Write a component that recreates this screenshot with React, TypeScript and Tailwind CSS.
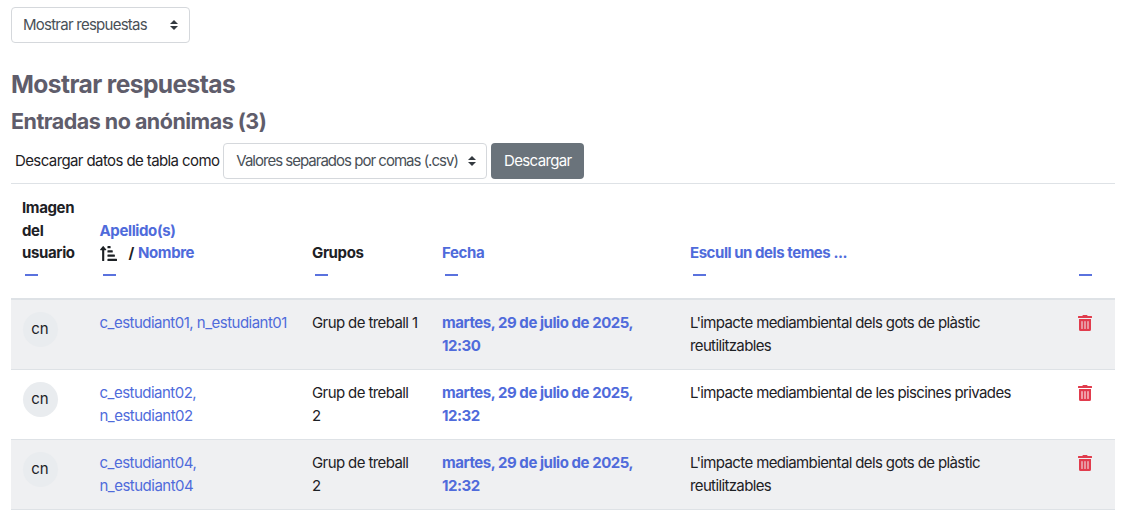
import { FaSortAmountUpAlt, FaTrashAlt } from "react-icons/fa";

const rows = [
  {
    name: ["c_estudiant01, n_estudiant01"],
    group: "Grup de treball 1",
    time: "12:30",
    topic: "L'impacte mediambiental dels gots de plàstic reutilitzables",
    shaded: true,
  },
  {
    name: ["c_estudiant02,", "n_estudiant02"],
    group: "Grup de treball 2",
    time: "12:32",
    topic: "L'impacte mediambiental de les piscines privades",
    shaded: false,
  },
  {
    name: ["c_estudiant04,", "n_estudiant04"],
    group: "Grup de treball 2",
    time: "12:32",
    topic: "L'impacte mediambiental dels gots de plàstic reutilitzables",
    shaded: true,
  },
];

function SelectCaret() {
  return (
    <svg width="10" height="12" viewBox="0 0 10 12" className="shrink-0" aria-hidden="true">
      <path d="M5 1 L9 5 H1 Z M5 11 L1 7 H9 Z" fill="#343a40" />
    </svg>
  );
}

function Dash() {
  return <span className="mx-[3px] block h-[21.5px] w-[13px] pt-[9px]"><span className="block h-[2px] bg-[#5a72de]" /></span>;
}

export default function App() {
  return (
    <div className="h-[531px] overflow-hidden bg-white px-[11px] pt-[7px] font-['Inter',sans-serif] text-[15px] leading-[22.5px] tracking-[-0.042em] text-[#1d2125]">
      <div className="flex h-9 w-[179px] items-center justify-between rounded-[4px] border border-[#d5d8dc] pl-[11px] pr-[10px] tracking-[-0.05em] text-[#495057]">
        <span>Mostrar respuestas</span>
        <SelectCaret />
      </div>

      <h2 className="mt-[27px] text-[24.6px] leading-[28px] font-bold tracking-[-0.024em] text-[#5f5d6b]">Mostrar respuestas</h2>
      <h3 className="mt-[11px] text-[21.5px] leading-[25px] font-bold tracking-[-0.024em] text-[#5f5d6b]">Entradas no anónimas (3)</h3>

      <div className="mt-[9px] flex items-center gap-1 pl-1">
        <span className="tracking-[-0.04em]">Descargar datos de tabla como</span>
        <div className="flex h-9 w-[264px] items-center justify-between rounded-[4px] border border-[#d5d8dc] pl-3 pr-[9px] text-[#495057]">
          <span className="whitespace-nowrap tracking-[-0.066em]">Valores separados por comas (.csv)</span>
          <SelectCaret />
        </div>
        <button className="h-9 w-[93px] rounded-[4px] bg-[#6a737b] text-white">Descargar</button>
      </div>

      <table className="mt-[4px] w-[1104px] table-fixed border-collapse border-t border-[#dee2e6]">
        <thead>
          <tr className="border-b-2 border-[#dee2e6] align-bottom tracking-[-0.025em]">
            <th className="w-[76.5px] pt-[13px] pr-0 pb-3 pl-[11px] text-left font-bold">
              Imagen del usuario
              <Dash />
            </th>
            <th className="w-[212.5px] px-3 pt-[13px] pb-3 text-left font-bold text-[#4f6bdb]">
              Apellido(s)
              <div className="flex items-center text-[#1d2125]">
                <FaSortAmountUpAlt className="size-[17px]" />
                <span className="ml-[12px] mr-1">/</span>
                <span className="text-[#4f6bdb]">Nombre</span>
              </div>
              <Dash />
            </th>
            <th className="w-[130px] px-3 pt-[13px] pb-3 text-left font-bold">
              Grupos
              <Dash />
            </th>
            <th className="w-[248px] px-3 pt-[13px] pb-3 text-left font-bold text-[#4f6bdb]">
              Fecha
              <Dash />
            </th>
            <th className="w-[376px] px-3 pt-[13px] pb-3 text-left font-bold tracking-[-0.03em] text-[#4f6bdb]">
              Escull un dels temes ...
              <Dash />
            </th>
            <th className="pt-[13px] pr-0 pb-3 pl-[22px] text-left">
              <Dash />
            </th>
          </tr>
        </thead>
        <tbody>
          {rows.map((row) => (
            <tr key={row.name[0]} className={`border-b border-[#dee2e6] align-top ${row.shaded ? "bg-[#eff0f2]" : ""}`}>
              <td className="py-3 pr-0 pl-[11.5px] pb-[11px]">
                <div className="flex size-[35px] items-center justify-center rounded-full bg-[#e9ecef] tracking-normal">cn</div>
              </td>
              <td className="p-3 tracking-[-0.034em] text-[#4f6bdb]">
                {row.name.map((part) => (
                  <div key={part}>{part}</div>
                ))}
              </td>
              <td className="p-3 tracking-[-0.04em]">{row.group}</td>
              <td className="p-3 font-bold tracking-[-0.03em] text-[#4f6bdb]">
                martes, 29 de julio de 2025, <br />
                {row.time}
              </td>
              <td className="p-3">{row.topic}</td>
              <td className="py-3 pr-0 pl-[23px]">
                <FaTrashAlt className="mt-[3px] size-[16px] text-[#e13c4d]" />
              </td>
            </tr>
          ))}
        </tbody>
      </table>
    </div>
  );
}
